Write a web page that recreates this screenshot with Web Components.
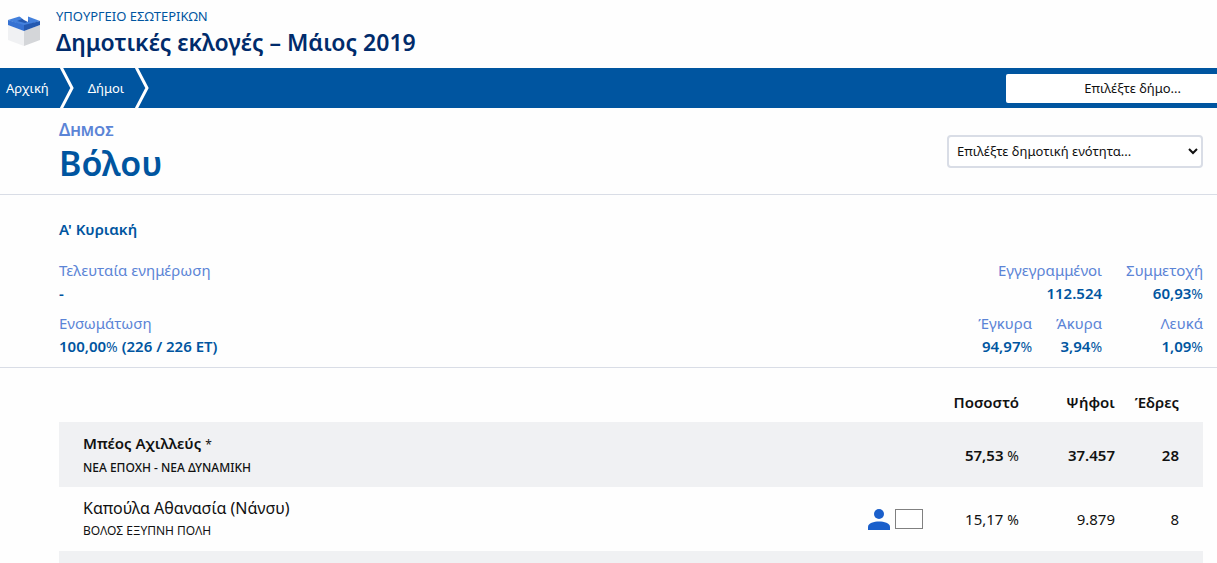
<!DOCTYPE html>
<html lang="el">
<head>
<meta charset="utf-8">
<title>Δημοτικές εκλογές – Μάιος 2019</title>
<style>
	body {
		margin: 0;
		background: #fefefe;
		color: #111;
		font-family: "Noto Sans", "Open Sans", sans-serif;
		font-size: 15px;
		--navy: #002b6b;
		--blue: #0055a0;
		--light: #5b84d6;
		--line: #d9dde6;
	}
</style>
</head>
<body>
<site-header ministry="ΥΠΟΥΡΓΕΙΟ ΕΣΩΤΕΡΙΚΩΝ">Δημοτικές εκλογές – Μάιος 2019</site-header>
<nav-bar>
	<nav-crumb>Αρχική</nav-crumb>
	<nav-crumb>Δήμοι</nav-crumb>
	<button-picker slot="end">Επιλέξτε δήμο...</button-picker>
</nav-bar>
<main>
	<place-title kind="Δημος" name="Βόλου"></place-title>
	<summary-panel round="Α' Κυριακή">
		<stat-item slot="left" label="Τελευταία ενημέρωση">-</stat-item>
		<stat-item slot="left" label="Ενσωμάτωση" unit="%" after=" (226 / 226 ΕΤ)">100,00</stat-item>
		<stat-item class="wide" label="Εγγεγραμμένοι">112.524</stat-item>
		<stat-item label="Συμμετοχή" unit="%">60,93</stat-item>
		<stat-item label="Έγκυρα" unit="%">94,97</stat-item>
		<stat-item label="Άκυρα" unit="%">3,94</stat-item>
		<stat-item label="Λευκά" unit="%">1,09</stat-item>
	</summary-panel>
	<results-table></results-table>
</main>

<script>
class SiteHeader extends HTMLElement {
	connectedCallback() {
		this.attachShadow({ mode: "open" });
		this.shadowRoot.innerHTML = `
			<style>
				:host { display: block; }
				header { display: flex; gap: 16px; padding: 8px; height: 52px; }
				svg { width: 32px; height: 32px; margin-top: 6px; }
				p, h1 { margin: 0; }
				p { color: var(--blue); font-size: 13px; line-height: 17px; }
				h1 { color: var(--navy); font-size: 23px; line-height: 34px; font-weight: 600; }
			</style>
			<header>
				<svg viewBox="0 0 32 32" aria-hidden="true">
					<path fill="#f0f1f3" d="M0 11L16 17V32L0 26z"/>
					<path fill="#d4d6d9" d="M32 11L16 17V32L32 26z"/>
					<path fill="#4380dc" d="M0 6L16 1L32 7L16 12z"/>
					<path fill="#3672d2" d="M0 6L16 11V17L0 11z"/>
					<path fill="#2459b0" d="M32 7L16 11V17L32 11z"/>
					<path fill="#2459b0" d="M9 7L14 5L22 7L17 9z"/>
					<path fill="#fff" d="M11 2L15 0L20 2V8L16 6z"/>
				</svg>
				<div>
					<p>${this.getAttribute("ministry")}</p>
					<h1><slot></slot></h1>
				</div>
			</header>
		`;
	}
}

class NavBar extends HTMLElement {
	connectedCallback() {
		this.attachShadow({ mode: "open" });
		this.shadowRoot.innerHTML = `
			<style>
				:host { display: block; }
				nav { display: flex; align-items: center; height: 40px; background: var(--blue); }
				.end { margin-left: auto; }
			</style>
			<nav>
				<slot></slot>
				<div class="end"><slot name="end"></slot></div>
			</nav>
		`;
	}
}

class NavCrumb extends HTMLElement {
	connectedCallback() {
		this.attachShadow({ mode: "open" });
		this.shadowRoot.innerHTML = `
			<style>
				:host { display: flex; align-items: center; height: 40px; font-size: 13px; }
				a { color: #fff; text-decoration: none; padding: 0 11px 0 6px; }
				svg { width: 14px; height: 40px; margin-right: 8px; }
			</style>
			<a href="#"><slot></slot></a>
			<svg viewBox="0 0 14 40" aria-hidden="true">
				<path fill="none" stroke="#fff" stroke-width="3" d="M1 -1L12 20L1 41"/>
			</svg>
		`;
	}
}

class ButtonPicker extends HTMLElement {
	connectedCallback() {
		this.attachShadow({ mode: "open" });
		this.shadowRoot.innerHTML = `
			<style>
				:host { display: block; }
				button {
					display: block;
					height: 29px;
					padding: 0 36px 0 78px;
					border: 0;
					border-radius: 2px 0 0 2px;
					background: #fff;
					color: #111;
					font: inherit;
					font-size: 13px;
				}
			</style>
			<button type="button"><slot></slot></button>
		`;
	}
}

class PlaceTitle extends HTMLElement {
	connectedCallback() {
		this.attachShadow({ mode: "open" });
		this.shadowRoot.innerHTML = `
			<style>
				:host { display: block; border-bottom: 1px solid var(--line); }
				section { display: flex; justify-content: space-between; align-items: center; height: 86px; padding: 0 14px 0 59px; }
				p, h2 { margin: 0; font-weight: 600; }
				p { color: var(--light); font-size: 17px; line-height: 24px; font-variant: small-caps; }
				h2 { color: var(--blue); font-size: 34px; line-height: 42px; }
				select {
					width: 256px;
					height: 33px;
					padding: 0 4px;
					border: 2px solid var(--line);
					border-radius: 4px;
					background: #fff;
					color: #111;
					font: inherit;
					font-size: 13px;
				}
			</style>
			<section>
				<div>
					<p>${this.getAttribute("kind")}</p>
					<h2>${this.getAttribute("name")}</h2>
				</div>
				<select aria-label="Δημοτική ενότητα">
					<option>Επιλέξτε δημοτική ενότητα...</option>
				</select>
			</section>
		`;
	}
}

class SummaryPanel extends HTMLElement {
	connectedCallback() {
		this.attachShadow({ mode: "open" });
		this.shadowRoot.innerHTML = `
			<style>
				:host { display: block; border-bottom: 1px solid var(--line); padding: 22px 14px 9px 59px; }
				h3 { margin: 0 0 18px; color: var(--blue); font-size: 15px; line-height: 24px; font-weight: 600; }
				.stats { display: flex; justify-content: space-between; }
				.left { display: grid; gap: 7px; }
				.right { display: grid; grid-template-columns: repeat(3, auto); gap: 7px 24px; text-align: right; }
				::slotted(.wide) { grid-column: span 2; }
			</style>
			<h3>${this.getAttribute("round")}</h3>
			<div class="stats">
				<div class="left"><slot name="left"></slot></div>
				<div class="right"><slot></slot></div>
			</div>
		`;
	}
}

class StatItem extends HTMLElement {
	connectedCallback() {
		this.attachShadow({ mode: "open" });
		const unit = this.getAttribute("unit") || "";
		const after = this.getAttribute("after") || "";
		this.shadowRoot.innerHTML = `
			<style>
				:host { display: block; line-height: 23px; font-size: 15px; }
				dl, dd { margin: 0; }
				dt { color: var(--light); }
				dd { color: var(--blue); font-weight: 600; }
				span { font-size: 14px; font-weight: 400; }
			</style>
			<dl>
				<dt>${this.getAttribute("label")}</dt>
				<dd><slot></slot><span>${unit}</span>${after}</dd>
			</dl>
		`;
	}
}

class ResultsTable extends HTMLElement {
	#rows = [
		{ name: "Μπέος Αχιλλεύς", mark: "*", party: "ΝΕΑ ΕΠΟΧΗ - ΝΕΑ ΔΥΝΑΜΙΚΗ", percent: "57,53", votes: "37.457", seats: "28", elected: true },
		{ name: "Καπούλα Αθανασία (Νάνσυ)", party: "ΒΟΛΟΣ ΕΞΥΠΝΗ ΠΟΛΗ", percent: "15,17", votes: "9.879", seats: "8", photo: true }
	];

	connectedCallback() {
		this.attachShadow({ mode: "open" });
		this.render();
	}
	renderRow(row) {
		const media = row.photo ? `<div class="media">
			<svg viewBox="0 0 22 22" aria-hidden="true">
				<circle cx="11" cy="6" r="5" fill="#1a5fcb"/>
				<path fill="#1a5fcb" d="M0 22V19C0 15 6 13.500 11 13.500S22 15 22 19V22z"/>
			</svg>
			<i></i>
		</div>` : "";
		return `
			<tr class="${row.elected ? "elected" : ""}">
				<td class="name">${row.name}${row.mark ? ` <small>${row.mark}</small>` : ""}<div class="party">${row.party}</div></td>
				<td>${media}</td>
				<td>${row.percent} <span>%</span></td>
				<td>${row.votes}</td>
				<td>${row.seats}</td>
			</tr>
		`;
	}
	render() {
		this.shadowRoot.innerHTML = `
			<style>
				:host { display: block; padding: 14px 14px 0 59px; }
				table { width: 100%; border-collapse: collapse; table-layout: fixed; font-size: 15px; }
				th, td { padding: 0; text-align: right; }
				th { height: 40px; font-weight: 600; }
				td { height: 64px; }
				col.media-col { width: 60px; }
				col.pct { width: 96px; }
				col.votes { width: 96px; }
				col.seats { width: 88px; }
				th:last-child, td:last-child { padding-right: 24px; }
				.name { padding-left: 24px; text-align: left; font-size: 16px; line-height: 24px; }
				.party { font-size: 12px; line-height: 22px; }
				.elected td { height: 65px; font-weight: 600; }
				.elected .name { font-size: 15px; }
				.elected .party { font-weight: 500; }
				tbody tr:nth-child(odd) { background: #f0f1f3; }
				small { font-size: 12px; font-weight: 400; }
				span { font-size: 14px; font-weight: 400; }
				.media { display: flex; justify-content: flex-end; align-items: center; gap: 5px; }
				.media svg { width: 22px; height: 22px; }
				.media i { box-sizing: border-box; width: 28px; height: 20px; border: 1px solid #808080; background: #fff; }
				.next td { height: 12px; }
			</style>
			<table>
				<colgroup><col><col class="media-col"><col class="pct"><col class="votes"><col class="seats"></colgroup>
				<thead>
					<tr><th></th><th></th><th scope="col">Ποσοστό</th><th scope="col">Ψήφοι</th><th scope="col">Έδρες</th></tr>
				</thead>
				<tbody>
					${this.#rows.map((row) => this.renderRow(row)).join("")}
					<tr class="next"><td colspan="5"></td></tr>
				</tbody>
			</table>
		`;
	}
}

customElements.define("site-header", SiteHeader);
customElements.define("nav-bar", NavBar);
customElements.define("nav-crumb", NavCrumb);
customElements.define("button-picker", ButtonPicker);
customElements.define("place-title", PlaceTitle);
customElements.define("summary-panel", SummaryPanel);
customElements.define("stat-item", StatItem);
customElements.define("results-table", ResultsTable);
</script>
</body>
</html>
